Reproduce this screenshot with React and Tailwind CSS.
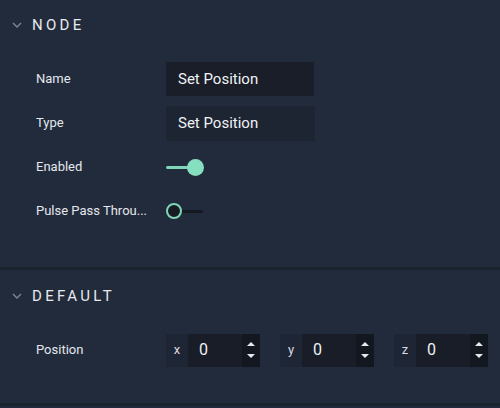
import { useState } from "react";

function Chevron() {
    return (
        <svg width="10" height="6" viewBox="0 0 10 6" className="shrink-0">
            <path d="M1 1 L5 5 L9 1" fill="none" stroke="#7d8696" strokeWidth="1.4" />
        </svg>
    );
}

function SectionHeader({ title, height }) {
    return (
        <div className={`flex items-center gap-[10px] pl-[12px] ${height}`}>
            <Chevron />
            <span className="text-[15px] tracking-[0.22em] text-[#e6e9ee] font-normal">
                {title}
            </span>
        </div>
    );
}

function Row({ label, children }) {
    return (
        <div className="flex items-center h-[44px]">
            <div className="w-[166px] pl-[36px] pr-2 text-[13px] text-[#e3e7ee] truncate">
                {label}
            </div>
            {children}
        </div>
    );
}

function Toggle({ on }) {
    if (on) {
        return (
            <div className="relative w-[40px] h-[18px] flex items-center">
                <div className="h-[3px] w-[26px] bg-[#7fd6b6] rounded-full" />
                <div className="absolute left-[21px] w-[17px] h-[17px] rounded-full bg-[#86e0c0]" />
            </div>
        );
    }
    return (
        <div className="relative w-[40px] h-[18px] flex items-center">
            <div className="absolute left-[12px] h-[3px] w-[25px] bg-[#141922] rounded-full" />
            <div className="absolute left-0 w-[16px] h-[16px] rounded-full border-2 border-[#7fd6b6] bg-[#161b24]" />
        </div>
    );
}

function VectorField({ axis, value }) {
    return (
        <div className="flex h-[33px] w-[94px]">
            <div className="w-[22px] bg-[#1e2534] flex items-center justify-center text-[13px] text-[#d7dbe2]">
                {axis}
            </div>
            <div className="w-[54px] bg-[#181d27] flex items-center pl-[11px] text-[16px] text-[#eef0f4]">
                {value}
            </div>
            <div className="w-[18px] bg-[#121720] flex flex-col items-center justify-center gap-[8px]">
                <svg width="8" height="4" viewBox="0 0 8 4">
                    <path d="M0 4 L4 0 L8 4 Z" fill="#e6e9ee" />
                </svg>
                <svg width="8" height="4" viewBox="0 0 8 4">
                    <path d="M0 0 L4 4 L8 0 Z" fill="#e6e9ee" />
                </svg>
            </div>
        </div>
    );
}

export default function App() {
    const [name] = useState("Set Position");

    return (
        <div
            className="w-[500px] h-[408px] overflow-hidden bg-[#222b3b] text-white"
            style={{ fontFamily: "Roboto, 'Liberation Sans', sans-serif" }}
        >
            {/* Node section */}
            <div className="h-[267px]">
                <SectionHeader title="NODE" height="h-[50px]" />
                <div className="mt-[7px]">
                    <Row label="Name">
                        <div className="w-[148px] h-[34px] bg-[#191e28] flex items-center pl-[12px] text-[15px] text-[#f0f2f5]">
                            {name}
                        </div>
                    </Row>
                    <Row label="Type">
                        <div className="w-[149px] h-[35px] bg-[#1d2432] flex items-center pl-[12px] text-[15px] text-[#f0f2f5]">
                            Set Position
                        </div>
                    </Row>
                    <Row label="Enabled">
                        <Toggle on />
                    </Row>
                    <Row label="Pulse Pass Throu...">
                        <Toggle on={false} />
                    </Row>
                </div>
            </div>

            <div className="h-[3px] bg-[#1b2230]" />

            {/* Default section */}
            <div className="h-[133px]">
                <SectionHeader title="DEFAULT" height="h-[52px]" />
                <div className="mt-[6px]">
                    <Row label="Position">
                        <div className="flex gap-[20px]">
                            <VectorField axis="x" value="0" />
                            <VectorField axis="y" value="0" />
                            <VectorField axis="z" value="0" />
                        </div>
                    </Row>
                </div>
            </div>

            <div className="h-[3px] bg-[#1b2230]" />
        </div>
    );
}
